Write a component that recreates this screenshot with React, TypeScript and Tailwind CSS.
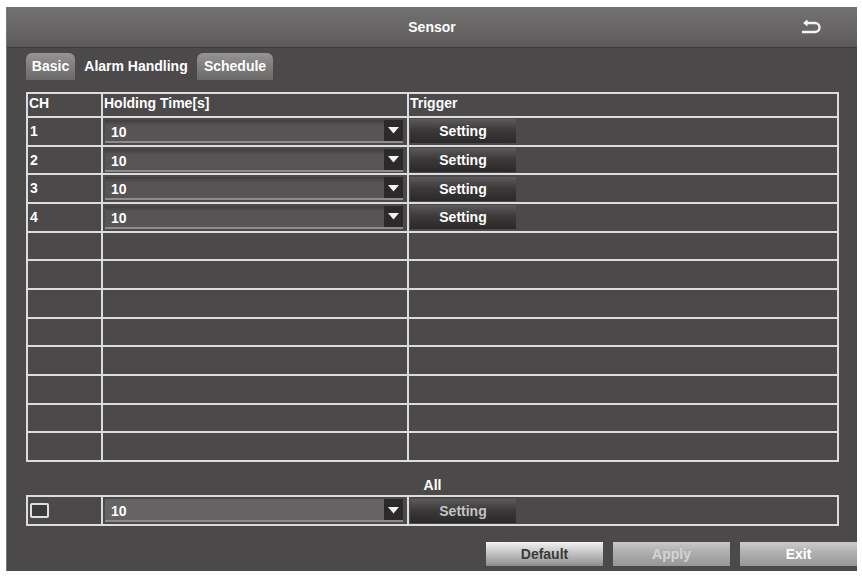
import React from 'react';

const channels = ['1', '2', '3', '4'];
const emptyRows = 8;

const DropArrow: React.FC = () => (
    <div className="w-[19px] h-full bg-[#2b2929] flex items-center justify-center">
        <svg width="11" height="8" viewBox="0 0 11 8">
            <polygon points="0,1 11,1 5.5,7.5" fill="#f2f2f2"/>
        </svg>
    </div>
);

const HoldSelect: React.FC<{value: string; light?: boolean}> = ({value, light}) => (
    <div className={`ml-[2px] w-[298px] h-[23px] flex border-b-2 border-[#8e8c8c] ${
        light ? 'bg-[#656363]' : 'bg-[linear-gradient(#3f3d3d,#555353_25%,#575555)]'
    }`}>
        <span className="flex-1 pl-[6px] pt-[4px] text-white font-bold leading-[16px]">{value}</span>
        <DropArrow/>
    </div>
);

const SettingButton: React.FC<{disabled?: boolean}> = ({disabled}) => (
    <button className={`ml-[1px] w-[106px] h-[24px] flex items-center justify-center font-bold leading-none bg-[linear-gradient(#5c5a5a,#3c3a3a_45%,#2a2828)] ${
        disabled ? 'text-[#c4c4c4]' : 'text-white'
    }`}>
        Setting
    </button>
);

const App: React.FC = () => {
    return (
        <div className="w-[862px] h-[576px] bg-white pl-[6px] pt-[7px] font-['Liberation_Sans',Arial,sans-serif] text-[14px]">
            <div className="w-[851px] h-[564px] flex flex-col bg-[#4b4949] border-l border-[#7a7878]">
                {/* Title bar */}
                <div className="h-[41px] grid grid-cols-[1fr_auto_1fr] items-center bg-[linear-gradient(#727070,#666464_60%,#5a5858)] border-b border-[#3a3838]">
                    <div/>
                    <span className="text-white font-bold text-[14px]">Sensor</span>
                    <div className="flex justify-end pr-[34px]">
                        <svg width="22" height="16" viewBox="0 0 22 16">
                            <path d="M4 4 H14 a4.5 4.5 0 0 1 0 9 H1" fill="none" stroke="#f4f4f4" strokeWidth="2.4"/>
                            <path d="M6.5 1.5 L3.5 4 L6.5 6.5" fill="none" stroke="#f4f4f4" strokeWidth="1.8"/>
                        </svg>
                    </div>
                </div>

                <div className="flex-1 flex flex-col pl-[19px]">
                    {/* Tabs */}
                    <div className="mt-[5px] h-[27px] flex items-stretch">
                        <div className="w-[49px] rounded-t-[6px] bg-[linear-gradient(#959393,#7a7878_60%,#6a6868)] flex items-center justify-center text-white font-bold">
                            Basic
                        </div>
                        <div className="w-[122px] flex items-center justify-center text-white font-bold">
                            Alarm Handling
                        </div>
                        <div className="w-[76px] rounded-t-[6px] bg-[linear-gradient(#959393,#7a7878_60%,#6a6868)] flex items-center justify-center text-white font-bold">
                            Schedule
                        </div>
                    </div>

                    {/* Channel table */}
                    <div className="mt-[12px] w-[813px] h-[370px] border-2 border-[#dcdcdc] flex flex-col text-white font-bold">
                        <div className="h-[22px] grid grid-cols-[75px_306px_1fr] leading-[18px]">
                            <div className="border-r-2 border-[#dcdcdc] pl-[1px]">CH</div>
                            <div className="border-r-2 border-[#dcdcdc] pl-[1px]">Holding Time[s]</div>
                            <div className="pl-[1px]">Trigger</div>
                        </div>
                        {channels.map((ch) => (
                            <div key={ch} className="flex-1 grid grid-cols-[75px_306px_1fr] border-t-2 border-[#dcdcdc]">
                                <div className="border-r-2 border-[#dcdcdc] pl-[2px] flex items-center">{ch}</div>
                                <div className="border-r-2 border-[#dcdcdc] flex items-center">
                                    <HoldSelect value="10"/>
                                </div>
                                <div className="flex items-center">
                                    <SettingButton/>
                                </div>
                            </div>
                        ))}
                        {Array.from({length: emptyRows}).map((_, i) => (
                            <div key={`empty-${i}`} className="flex-1 grid grid-cols-[75px_306px_1fr] border-t-2 border-[#dcdcdc]">
                                <div className="border-r-2 border-[#dcdcdc]"/>
                                <div className="border-r-2 border-[#dcdcdc]"/>
                                <div/>
                            </div>
                        ))}
                    </div>

                    {/* Apply to all channels */}
                    <div className="mt-[15px] w-[813px] h-[16px] leading-[16px] text-center text-white font-bold">All</div>
                    <div className="mt-[2px] w-[813px] h-[31px] border-2 border-[#dcdcdc] grid grid-cols-[75px_306px_1fr] text-white">
                        <div className="border-r-2 border-[#dcdcdc] flex items-center">
                            <div className="ml-[2px] w-[19px] h-[15px] border-2 border-[#dedede] rounded-[2px] bg-[#3c3a3a]"/>
                        </div>
                        <div className="border-r-2 border-[#dcdcdc] flex items-center">
                            <HoldSelect value="10" light/>
                        </div>
                        <div className="flex items-center">
                            <SettingButton disabled/>
                        </div>
                    </div>

                    {/* Footer buttons */}
                    <div className="mt-[16px] flex justify-end gap-[10px] font-bold">
                        <button className="w-[117px] h-[24px] bg-[linear-gradient(#f2f2f2,#d4d4d4_30%,#a8a8a8_75%,#8c8c8c)] text-[#3a3a3a]">
                            Default
                        </button>
                        <button className="w-[117px] h-[24px] bg-[linear-gradient(#c8c8c8,#b0b0b0_40%,#979797)] text-[#d4d4d4]">
                            Apply
                        </button>
                        <button className="w-[117px] h-[24px] bg-[linear-gradient(#cccccc,#b2b2b2_40%,#979797)] text-white">
                            Exit
                        </button>
                    </div>
                </div>
            </div>
        </div>
    );
};

export default App;
